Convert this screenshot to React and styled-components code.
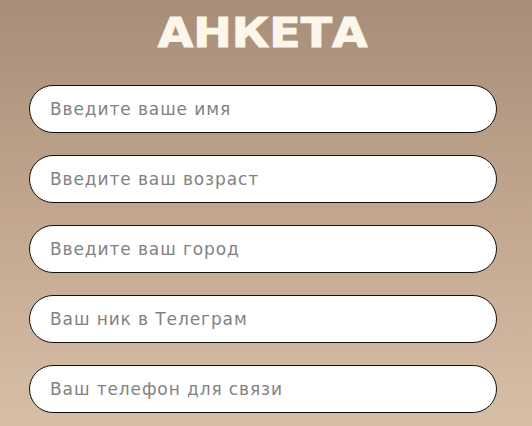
import React from "react";
import styled, { createGlobalStyle } from "styled-components";

const Global = createGlobalStyle`
  html, body { margin: 0; padding: 0; }
  body {
    width: 532px;
    height: 426px;
    overflow: hidden;
    background: linear-gradient(180deg, #a78e79 0%, #c2a68f 50%, #d7bfa7 100%);
    font-family: "DejaVu Sans", sans-serif;
  }
`;

const Page = styled.div`
  width: 532px;
  height: 426px;
  display: flex;
  flex-direction: column;
  box-sizing: border-box;
  padding: 5px 0 0 29px;
`;

const Title = styled.h1`
  align-self: center;
  margin: 0 0 0 -36px;
  font-family: "DejaVu Sans", sans-serif;
  font-weight: 700;
  font-size: 41px;
  line-height: 56px;
  color: #fcf7ea;
  -webkit-text-stroke: 1px #fcf7ea;
  letter-spacing: 0px;
  transform: scaleX(1.12);
`;

const Form = styled.form`
  margin-top: 24px;
  display: flex;
  flex-direction: column;
  gap: 22px;
  width: 468px;
`;

const Field = styled.input`
  box-sizing: border-box;
  width: 100%;
  height: 48px;
  border: 1px solid #111;
  border-radius: 24px;
  background: #fff;
  padding: 0 0 0 20px;
  font-family: "DejaVu Sans", sans-serif;
  font-size: 17px;
  letter-spacing: 0.9px;
  color: #333;
  outline: none;
  &::placeholder { color: #828282; }
`;

const fields = [
  "Введите ваше имя",
  "Введите ваш возраст",
  "Введите ваш город",
  "Ваш ник в Телеграм",
  "Ваш телефон для связи",
];

export default function App() {
  return (
    <>
      <Global />
      <Page>
        <Title>АНКЕТА</Title>
        <Form onSubmit={(e) => e.preventDefault()}>
          {fields.map((f) => (
            <Field key={f} placeholder={f} />
          ))}
        </Form>
      </Page>
    </>
  );
}
